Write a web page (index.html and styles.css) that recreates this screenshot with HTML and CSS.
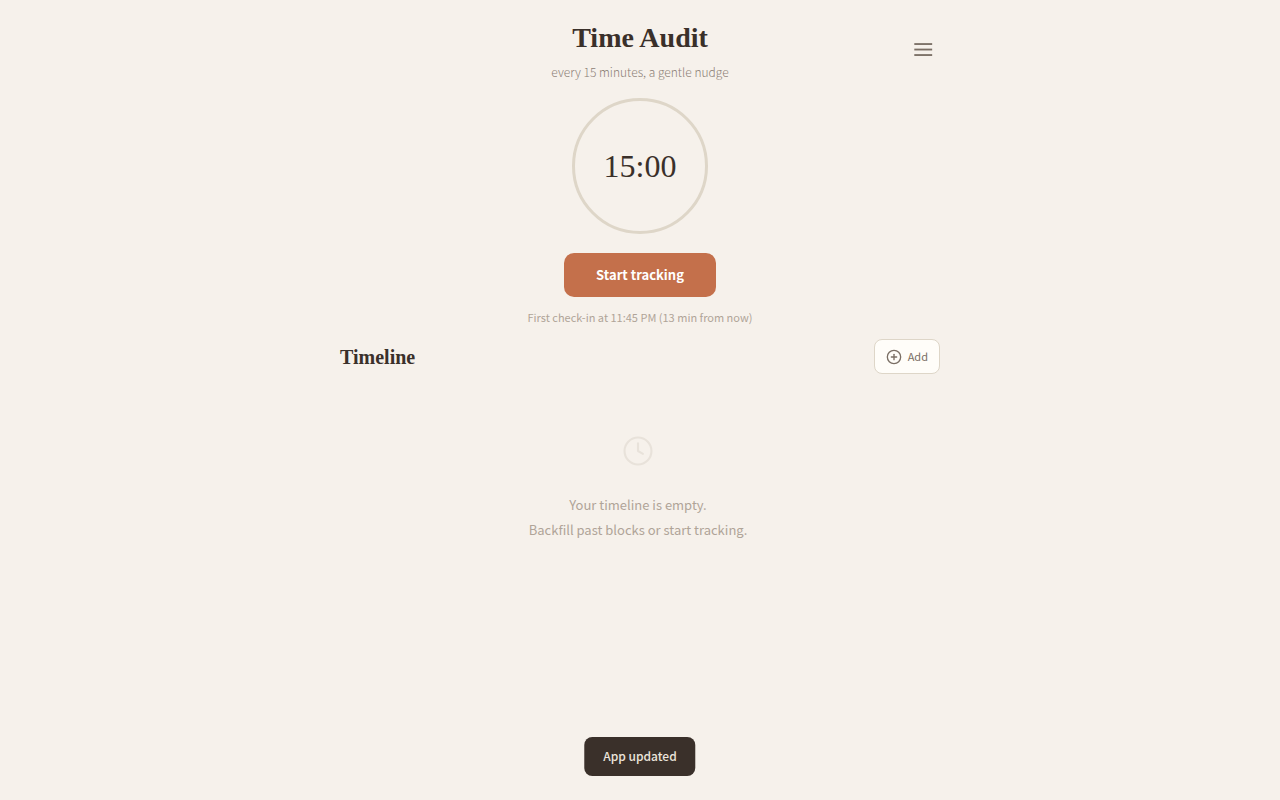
FILE: index.html
```html
<!DOCTYPE html>
<html lang="en">
<head>
    <meta charset="UTF-8">
    <meta name="viewport" content="width=device-width, initial-scale=1">
    <title>Time Audit</title>
    <link rel="stylesheet" href="styles.css">
</head>
<body>
    <div class="app">
        <header class="header">
            <div class="brand">
                <h1>Time Audit</h1>
                <p class="subtitle">every 15 minutes, a gentle nudge</p>
            </div>
            <button class="menu-btn" type="button" aria-label="Menu">
                <svg width="22" height="22" viewBox="0 0 24 24" fill="none" stroke="currentColor" stroke-width="2">
                    <line x1="2.5" y1="5.5" x2="22" y2="5.5"/>
                    <line x1="2.5" y1="11.5" x2="22" y2="11.5"/>
                    <line x1="2.5" y1="17.5" x2="22" y2="17.5"/>
                </svg>
            </button>
        </header>

        <section class="timer">
            <div class="ring">
                <span class="time">15:00</span>
            </div>
            <button class="start-btn" type="button">Start tracking</button>
            <p class="next-check">First check-in at 11:45 PM (13 min from now)</p>
        </section>

        <main class="timeline">
            <div class="timeline-header">
                <h2>Timeline</h2>
                <button class="add-btn" type="button">
                    <svg width="16" height="16" viewBox="0 0 24 24" fill="none" stroke="currentColor" stroke-width="2" stroke-linecap="round">
                        <circle cx="12" cy="12" r="10"/>
                        <line x1="12" y1="8" x2="12" y2="16"/>
                        <line x1="8" y1="12" x2="16" y2="12"/>
                    </svg>
                    Add
                </button>
            </div>
            <div class="timeline-list">
                <div class="empty">
                    <svg class="empty-icon" width="34" height="34" viewBox="0 0 24 24" fill="none" stroke="currentColor" stroke-width="1.5" stroke-linecap="round" stroke-linejoin="round">
                        <circle cx="12" cy="12" r="9.5"/>
                        <polyline points="12 6.5 12 12 15.5 14"/>
                    </svg>
                    <p>Your timeline is empty.<br>Backfill past blocks or start tracking.</p>
                </div>
            </div>
        </main>
    </div>

    <div class="toast" role="status">App updated</div>
</body>
</html>
```
FILE: styles.css
```css
:root {
    --bg: #f6f1eb;
    --card: #fffdf9;
    --text: #3a302a;
    --text-mid: #7a6e64;
    --text-light: #b0a498;
    --border: #ded6c8;
    --accent: #c4704b;
    --serif: "Liberation Serif", serif;
    --sans: "Noto Sans CJK SC", "Open Sans", sans-serif;
}

* {
    box-sizing: border-box;
    margin: 0;
    padding: 0;
}

body {
    min-height: 100vh;
    background: var(--bg);
    color: var(--text);
    font-family: var(--sans);
}

button {
    font-family: inherit;
    cursor: pointer;
}

svg {
    display: block;
}

.app {
    max-width: 600px;
    margin: 0 auto;
    padding-top: 20px;
}

.header {
    display: grid;
    grid-template-columns: 34px 1fr 34px;
    align-items: start;
}

.brand {
    grid-column: 2;
    text-align: center;
}

h1 {
    font-family: var(--serif);
    font-size: 28px;
    font-weight: 600;
    line-height: 36px;
}

.subtitle {
    margin-top: 4px;
    font-size: 12px;
    font-weight: 300;
    line-height: 24px;
    color: #8c8076;
}

.menu-btn {
    margin-top: 13px;
    padding: 6px;
    border: none;
    background: none;
    color: var(--text-mid);
}

.timer {
    display: flex;
    flex-direction: column;
    align-items: center;
    padding-top: 14px;
}

.ring {
    display: grid;
    place-items: center;
    width: 136px;
    height: 136px;
    border: 3px solid var(--border);
    border-radius: 50%;
}

.time {
    font-family: var(--serif);
    font-size: 32px;
    line-height: 40px;
}

.start-btn {
    margin-top: 19px;
    padding: 10px 32px;
    border: none;
    border-radius: 10px;
    background: var(--accent);
    color: #fff;
    font-size: 13px;
    font-weight: 700;
    line-height: 24px;
}

.next-check {
    margin-top: 10px;
    font-size: 11px;
    line-height: 20px;
    color: var(--text-light);
}

.timeline-header {
    display: flex;
    align-items: center;
    justify-content: space-between;
    padding-top: 12px;
}

h2 {
    font-family: var(--serif);
    font-size: 20px;
    font-weight: 600;
    line-height: 24px;
}

.add-btn {
    display: flex;
    align-items: center;
    gap: 6px;
    padding: 6px 11px;
    border: 1px solid var(--border);
    border-radius: 8px;
    background: var(--card);
    color: var(--text-mid);
    font-size: 11px;
    line-height: 21px;
}

.timeline-list {
    padding-right: 4px;
}

.empty {
    display: flex;
    flex-direction: column;
    align-items: center;
    padding: 60px 20px;
    text-align: center;
    font-size: 13px;
    line-height: 25px;
    color: var(--text-light);
}

.empty-icon {
    margin-bottom: 24px;
    color: #e8e2da;
}

.toast {
    position: fixed;
    bottom: 24px;
    left: 50%;
    transform: translateX(-50%);
    padding: 8px 19px 10px;
    border-radius: 8px;
    background: var(--text);
    color: #ece5dc;
    font-size: 12px;
    font-weight: 500;
    line-height: 21px;
}
```
